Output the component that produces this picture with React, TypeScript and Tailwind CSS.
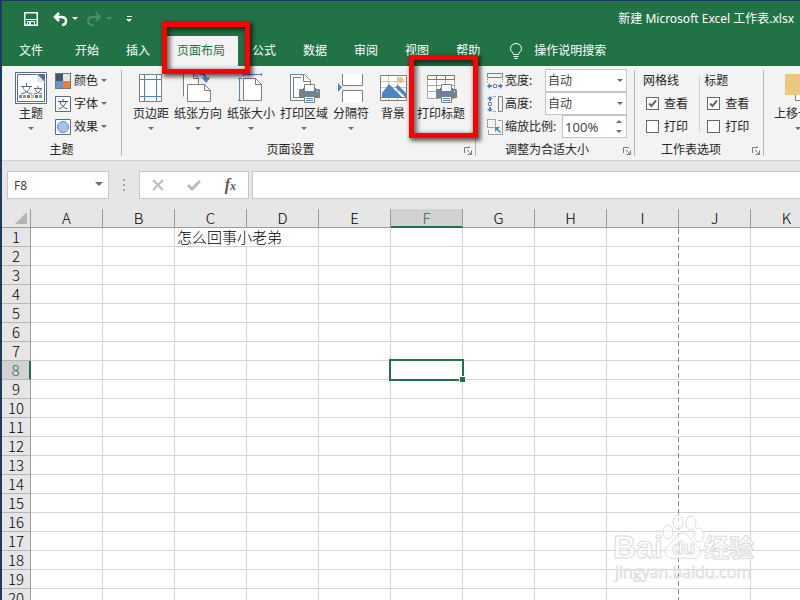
import type { ReactNode } from "react";

const COLUMNS = ["A", "B", "C", "D", "E", "F", "G", "H", "I", "J", "K", "L"];
const ROWS = Array.from({ length: 24 }, (_, i) => i + 1);
const ACTIVE_COLUMN = "F";
const ACTIVE_ROW = 8;

type ChildrenProps = { children: ReactNode };

function Caret({ className = "text-[#6d6d6d]" }: { className?: string }) {
  return (
    <svg viewBox="0 0 6 3" className={`h-[3px] w-[6px] shrink-0 ${className}`}>
      <path d="M0 0h6L3 3z" fill="currentColor" />
    </svg>
  );
}

/* ---------- icons ---------- */

function ThemeIcon() {
  const swatches = ["#5b9bd5", "#ed7d31", "#7f7f7f", "#ffc000", "#4472c4", "#70ad47"];
  return (
    <svg viewBox="0 0 32 32" className="size-8" fill="none">
      <path d="M.5.5h31v31H.5z" fill="#fff" stroke="#5a6e8c" />
      <path d="M2.5 29.500v-27h19l8 8v19z" stroke="#5a6e8c" />
      <path d="M22 2v8h8V2z" fill="#5a6e8c" />
      <path d="M22 2v8h8z" fill="#dfe4ec" />
      <path
        d="M6 14.500h11M11.500 11v3M15 15c-1 4-4 6-9 7M8 15c1 4 4 6 9 7M19 16.500h8M23 14v2M26 17c-1 3-3 4-7 5M20 17c1 3 3 4 7 5"
        stroke="#5a6e8c"
      />
      {swatches.map((color, i) => (
        <rect key={color} x={4 + i * 4} y="23" width="3" height="3" fill={color} />
      ))}
    </svg>
  );
}

function ColorsIcon() {
  return (
    <svg viewBox="0 0 16 16" className="size-4">
      <path d="M0 0h16v16H0z" fill="#777" />
      <path d="M1 1h7v7H1z" fill="#44546a" />
      <path d="M8 1h7v7H8z" fill="#e7e6e6" />
      <path d="M1 8h7v7H1z" fill="#5b9bd5" />
      <path d="M8 8h7v7H8z" fill="#ed7d31" />
    </svg>
  );
}

function FontsIcon() {
  return (
    <svg viewBox="0 0 16 16" className="size-4" fill="none">
      <path d="M.5.5h15v15H.5z" fill="#fff" stroke="#5a6e8c" />
      <path d="M3 5.500h10M8 3v2.500M11 6c-.8 3-3 5.500-7.500 7M5 6c.8 3 3 5.500 7.500 7" stroke="#44546a" />
    </svg>
  );
}

function EffectsIcon() {
  return (
    <svg viewBox="0 0 16 16" className="size-4">
      <path d="M.5.5h15v15H.5z" fill="#fff" stroke="#5a6e8c" />
      <circle cx="8" cy="8" r="5.500" fill="#a3c4ec" stroke="#5b8fcf" />
    </svg>
  );
}

function MarginsIcon() {
  return (
    <svg viewBox="0 0 32 32" className="size-8" fill="none">
      <path d="M4.500 2.500h22v27h-22z" fill="#fff" stroke="#7f7f7f" />
      <path d="M9.500 3v26M21.500 3v26M5 7.500h21M5 24.500h21" stroke="#4a86c5" />
    </svg>
  );
}

function OrientationIcon() {
  return (
    <svg viewBox="0 0 32 32" className="size-8" fill="none">
      <path d="M1.500 24.500v-23h10l5 5v6M11.500 1.500v5h5" fill="#fff" stroke="#7f7f7f" />
      <path d="M5.500 29.500v-17h17l6 6v11z" fill="#fff" stroke="#7f7f7f" />
      <path d="M22.500 12.500v6h6" stroke="#7f7f7f" />
      <path d="M17 1.500c4 0 7 2 7 6" stroke="#4a86c5" strokeWidth="2" />
      <path d="M19.500 5.500h9L24 11z" fill="#4a86c5" />
    </svg>
  );
}

function SizeIcon() {
  return (
    <svg viewBox="0 0 32 32" className="size-8" fill="none">
      <path d="M8.500 6.500h12l6 6v16h-18z" fill="#fff" stroke="#7f7f7f" />
      <path d="M20.500 6.500v6h6" stroke="#7f7f7f" />
      <path d="M4.500 6v22M3 6.500h4M3 28.500h4M8 2.500h18M8.500 1v3M26.500 1v3" stroke="#4a86c5" />
    </svg>
  );
}

function Printer({ x, y }: { x: number; y: number }) {
  return (
    <g transform={`translate(${x} ${y})`}>
      <path d="M0 6l1-1h19l1 1v8H0z" fill="#7f7f7f" />
      <path d="M4 4h13v5H4z" fill="#4a86c5" />
      <path d="M5.500.5h10v7h-10z" fill="#fff" stroke="#7f7f7f" />
      <path d="M18 7h1v1h-1z" fill="#fff" />
      <path d="M5.500 12.500h10v6h-10z" fill="#fff" stroke="#7f7f7f" />
      <path d="M7 14.500h7M7 16.500h7" stroke="#4a86c5" />
    </g>
  );
}

function PrintAreaIcon() {
  return (
    <svg viewBox="0 0 32 32" className="size-8" fill="none">
      <path d="M2.500 2.500h14l6 6v20h-20z" fill="#fff" stroke="#7f7f7f" />
      <path d="M15.500 2.500v7h7" stroke="#7f7f7f" />
      <path d="M13 5.500H5.500v20H13" stroke="#4a86c5" />
      <Printer x={11} y={12} />
    </svg>
  );
}

function BreaksIcon() {
  return (
    <svg viewBox="0 0 32 32" className="size-8" fill="none">
      <path d="M7.500 2v11.500h20V2M7.500 30V18.500h20V30" fill="#fff" stroke="#7f7f7f" />
      <path d="M3 11v9l4-4.500z" fill="#4a86c5" />
    </svg>
  );
}

function BackgroundIcon() {
  return (
    <svg viewBox="0 0 32 32" className="size-8" fill="none">
      <path d="M3.500 3.500h26v25h-26z" fill="#fff" stroke="#7f7f7f" />
      <path d="M11.500 4v24M20.500 4v24M4 9.500h25M4 15.500h25" stroke="#c5c5c5" />
      <circle cx="23.500" cy="8" r="3" fill="#eec27a" />
      <path d="M5 25v-4l7-9 13 13z" fill="#4a86c5" />
      <path d="M18 15l3-2 8 8v4h-1z" fill="#4a86c5" />
      <path d="M3.500 25.500h26" stroke="#7f7f7f" />
    </svg>
  );
}

function PrintTitlesIcon() {
  return (
    <svg viewBox="0 0 32 32" className="size-8" fill="none">
      <path d="M2.500 7.500h27v19h-27z" fill="#fff" stroke="#a6a6a6" />
      <path d="M11.500 8v18M20.500 8v18M3 13.500h26M3 19.500h26" stroke="#a6a6a6" />
      <path d="M2.500 3.500h27v4h-27zM11.500 3.500v4M20.500 3.500v4" fill="#fff" stroke="#d0563a" />
      <Printer x={11} y={12} />
    </svg>
  );
}

function WidthIcon() {
  return (
    <svg viewBox="0 0 16 16" className="size-4" fill="none">
      <path d="M.5.5h15v4H.5z" stroke="#7f7f7f" />
      <path d="M.5 6v4M15.500 6v4" stroke="#7f7f7f" strokeDasharray="1 1" />
      <path d="M6.500 11.500h3v3h-3z" stroke="#7f7f7f" />
      <path d="M0 13l3-3v2h2v2H3v2zM16 13l-3-3v2h-2v2h2v2z" fill="#4a86c5" />
    </svg>
  );
}

function HeightIcon() {
  return (
    <svg viewBox="0 0 16 16" className="size-4" fill="none">
      <path d="M11.500.5h4v15h-4z" stroke="#7f7f7f" />
      <path d="M6 .5h4M6 15.500h4" stroke="#7f7f7f" strokeDasharray="1 1" />
      <path d="M1.500 6.500h3v3h-3z" stroke="#7f7f7f" />
      <path d="M3 0l3 3H4v2H2V3H0zM3 16l3-3H4v-2H2v2H0z" fill="#4a86c5" />
    </svg>
  );
}

function ScaleIcon() {
  return (
    <svg viewBox="0 0 16 16" className="size-4" fill="none">
      <path d="M.5.5h8v8h-8z" stroke="#7f7f7f" strokeDasharray="2 1" />
      <path d="M11 1.500h4.500v14H1.500V11" stroke="#a0a0a0" />
      <path d="M8 8h5l-2 2 3 3-1 1-3-3-2 2z" fill="#4a86c5" />
    </svg>
  );
}

function BringForwardIcon() {
  return (
    <svg viewBox="0 0 32 32" className="size-8" fill="none">
      <path d="M13.500 13.500h15v15h-15z" fill="#fff" stroke="#7f7f7f" />
      <path d="M3 2h21v21H3z" fill="#eec77d" />
    </svg>
  );
}

function LauncherButton({ label }: { label: string }) {
  return (
    <button type="button" aria-label={label} className="mt-1 flex w-4 shrink-0 justify-end pr-[3px]">
      <svg viewBox="0 0 8 8" className="size-2" fill="none" stroke="#777">
        <path d="M.5 6V.5H6M3 3l4 4M7.500 3.500v4h-4" />
      </svg>
    </button>
  );
}

/* ---------- title bar and tabs ---------- */

function TitleBar() {
  return (
    <div className="flex h-[35px] items-center pr-[6px] pl-[22px] text-white">
      <button type="button" aria-label="保存">
        <svg viewBox="0 0 14 14" className="size-[14px]" fill="none" stroke="#fff">
          <path d="M.75.75h12.500v12.500H.75z" strokeWidth="1.500" />
          <path d="M2 7.500h10M3.500 13V9.500h7V13" />
          <path d="M5 10h2v3H5z" fill="#fff" stroke="none" />
        </svg>
      </button>
      <button type="button" aria-label="撤消" className="ml-[14px] flex items-center gap-1">
        <svg viewBox="0 0 16 14" className="h-[14px] w-4" fill="none" stroke="#fff" strokeWidth="2.500">
          <path d="M7 1L3 5l4 4M3 5h6c3 0 5 1 5 4s-2 4-4 4" />
        </svg>
        <Caret className="text-white" />
      </button>
      <button type="button" aria-label="恢复" className="ml-2 flex items-center gap-1">
        <svg viewBox="0 0 16 14" className="h-[14px] w-4" fill="none" stroke="#4d8f6b" strokeWidth="2">
          <path d="M10 1l4 4-4 4M14 5H7C4 5 2 6 2 9s2 4 5 4" />
        </svg>
        <Caret className="text-[#4d8f6b]" />
      </button>
      <button type="button" aria-label="自定义快速访问工具栏" className="ml-[14px] flex flex-col items-center gap-[2px]">
        <span className="h-px w-[5px] bg-white" />
        <Caret className="text-white" />
      </button>
      <h1 className="ml-auto text-xs whitespace-nowrap">新建 Microsoft Excel 工作表.xlsx</h1>
    </div>
  );
}

function Highlight({ className }: { className: string }) {
  return (
    <span
      className={`pointer-events-none absolute z-10 border-[5px] border-[#fe0000] shadow-[2px_2px_4px_1px_rgba(0,0,0,0.6),inset_2px_2px_5px_1px_rgba(0,0,0,0.6)] ${className}`}
    />
  );
}

function Tabs() {
  const tabs = ["开始", "插入", "页面布局", "公式", "数据", "审阅", "视图", "帮助"];
  return (
    <nav className="flex h-[30px] gap-px text-xs text-white">
      <button type="button" className="pr-[18px] pl-[17px]">
        文件
      </button>
      {tabs.map((tab) =>
        tab === "页面布局" ? (
          <button key={tab} type="button" className="relative bg-[#f3f3f3] px-[13px] text-[#217346]">
            {tab}
            <Highlight className="-top-[14px] -left-[2px] h-[52px] w-[88px]" />
          </button>
        ) : (
          <button key={tab} type="button" className="px-[13px]">
            {tab}
          </button>
        )
      )}
      <button type="button" className="flex items-center gap-3 pl-4">
        <svg viewBox="0 0 12 17" className="h-[17px] w-3" fill="none" stroke="#fff">
          <path d="M3.500 11.500c0-2-3-3-3-6a5.500 5 0 0 1 11 0c0 3-3 4-3 6zM3.500 13.500h5M4.500 15.500h3" />
        </svg>
        操作说明搜索
      </button>
    </nav>
  );
}

/* ---------- ribbon ---------- */

type GroupProps = {
  title?: string;
  launcher?: boolean;
  className?: string;
  children: ReactNode;
};

function Group({ title, launcher, className = "", children }: GroupProps) {
  return (
    <section className="flex shrink-0">
      <div className="flex flex-col pt-[3px]">
        <div className={`flex h-[69px] shrink-0 ${className}`}>{children}</div>
        <div className="flex h-[22px] items-center">
          <h2 className="flex-1 pt-[2px] text-center">{title}</h2>
          {launcher && <LauncherButton label={`${title}选项`} />}
        </div>
      </div>
      <div className="mt-1 h-[86px] w-px bg-[#b5b5b5]" />
    </section>
  );
}

type LargeButtonProps = {
  icon: ReactNode;
  label: string;
  caret?: boolean;
  className?: string;
  children?: ReactNode;
};

function LargeButton({ icon, label, caret = true, className = "px-[2px]", children }: LargeButtonProps) {
  return (
    <button type="button" className={`relative flex shrink-0 flex-col items-center pt-[3px] ${className}`}>
      {icon}
      <span className="mt-[2px] mb-[5px] leading-4 whitespace-nowrap">{label}</span>
      {caret && <Caret />}
      {children}
    </button>
  );
}

function SmallButton({ icon, label }: { icon: ReactNode; label: string }) {
  return (
    <button type="button" className="flex h-[23px] items-center gap-[3px]">
      {icon}
      <span>{label}</span>
      <Caret />
    </button>
  );
}

function FitSelect({ id, icon, label }: { id: string; icon: ReactNode; label: string }) {
  return (
    <div className="flex h-[23px] items-center">
      {icon}
      <label htmlFor={id} className="ml-[2px] flex-1">
        {label}
      </label>
      <div className="relative">
        <select
          id={id}
          className="block h-[23px] w-[82px] appearance-none border border-[#c6c6c6] bg-white pl-[2px] text-xs text-[#444]"
        >
          <option>自动</option>
        </select>
        <span className="pointer-events-none absolute top-[10px] right-1">
          <Caret />
        </span>
      </div>
    </div>
  );
}

function Option({ label, checked = false }: { label: string; checked?: boolean }) {
  return (
    <label className="flex h-[23px] items-center gap-[5px] pl-[3px]">
      <span className="relative size-[13px]">
        <input
          type="checkbox"
          defaultChecked={checked}
          className="peer block size-[13px] appearance-none border border-[#666] bg-white"
        />
        <svg
          viewBox="0 0 13 13"
          className="pointer-events-none invisible absolute inset-0 peer-checked:visible"
          fill="none"
          stroke="#666"
          strokeWidth="2"
        >
          <path d="M3 6.500l2.500 2.500L10 3.500" />
        </svg>
      </span>
      {label}
    </label>
  );
}

function OptionColumn({ title, children }: { title: string } & ChildrenProps) {
  return (
    <fieldset>
      <legend className="h-[23px] leading-[23px]">{title}</legend>
      {children}
    </fieldset>
  );
}

function Ribbon() {
  return (
    <div className="flex h-[95px] border-b border-[#d2d2d2] bg-[#f3f3f3] text-xs text-[#262626]">
      <Group title="主题" className="pr-[14px] pl-[13px]">
        <LargeButton icon={<ThemeIcon />} label="主题" className="mr-2" />
        <div className="flex flex-col">
          <SmallButton icon={<ColorsIcon />} label="颜色" />
          <SmallButton icon={<FontsIcon />} label="字体" />
          <SmallButton icon={<EffectsIcon />} label="效果" />
        </div>
      </Group>

      <Group title="页面设置" launcher className="gap-px pr-2 pl-[9px]">
        <LargeButton icon={<MarginsIcon />} label="页边距" />
        <LargeButton icon={<OrientationIcon />} label="纸张方向" />
        <LargeButton icon={<SizeIcon />} label="纸张大小" />
        <LargeButton icon={<PrintAreaIcon />} label="打印区域" />
        <LargeButton icon={<BreaksIcon />} label="分隔符" />
        <LargeButton icon={<BackgroundIcon />} label="背景" caret={false} className="w-[42px]" />
        <LargeButton icon={<PrintTitlesIcon />} label="打印标题" caret={false}>
          <Highlight className="-top-[14px] -left-[6px] h-[83px] w-[69px]" />
        </LargeButton>
      </Group>

      <Group title="调整为合适大小" launcher className="w-[158px] flex-col pr-[7px] pl-[11px]">
        <FitSelect id="fit-width" icon={<WidthIcon />} label="宽度:" />
        <FitSelect id="fit-height" icon={<HeightIcon />} label="高度:" />
        <div className="flex h-[23px] items-center">
          <ScaleIcon />
          <label htmlFor="fit-scale" className="ml-[2px] flex-1 whitespace-nowrap">
            缩放比例:
          </label>
          <div className="relative">
            <input
              id="fit-scale"
              defaultValue="100%"
              className="block h-[23px] w-[65px] border border-[#c6c6c6] bg-white pl-[2px] text-[13px] text-[#444]"
            />
            <span className="pointer-events-none absolute top-[5px] right-[5px] flex flex-col gap-[7px]">
              <Caret className="rotate-180 text-[#6d6d6d]" />
              <Caret />
            </span>
          </div>
        </div>
      </Group>

      <Group title="工作表选项" launcher className="w-[128px] pl-2">
        <OptionColumn title="网格线">
          <Option label="查看" checked />
          <Option label="打印" />
        </OptionColumn>
        <div className="mt-[7px] mr-1 ml-[11px] h-14 w-px bg-[#d2d2d2]" />
        <OptionColumn title="标题">
          <Option label="查看" checked />
          <Option label="打印" />
        </OptionColumn>
      </Group>

      <Group className="pl-2">
        <LargeButton icon={<BringForwardIcon />} label="上移一层" />
      </Group>
    </div>
  );
}

/* ---------- formula bar ---------- */

function FormulaBar() {
  return (
    <div className="flex h-12 items-start bg-[#e6e6e6] pt-[10px] pl-[5px]">
      <div className="relative">
        <input
          aria-label="名称框"
          defaultValue="F8"
          className="block h-7 w-[102px] border border-[#c6c6c6] bg-white pl-[6px] text-xs text-[#444]"
        />
        <svg viewBox="0 0 8 4" className="pointer-events-none absolute top-[11px] right-[6px] h-1 w-2">
          <path d="M0 0h8L4 4z" fill="#6d6d6d" />
        </svg>
      </div>
      <div className="flex h-7 w-[30px] flex-col items-center justify-center gap-[3px]">
        <span className="size-[2px] bg-[#a6a6a6]" />
        <span className="size-[2px] bg-[#a6a6a6]" />
        <span className="size-[2px] bg-[#a6a6a6]" />
      </div>
      <div className="flex h-7 w-[110px] items-center justify-between border border-[#c6c6c6] bg-white px-3">
        <button type="button" aria-label="取消">
          <svg viewBox="0 0 12 12" className="size-3" fill="none" stroke="#bdbdbd" strokeWidth="2">
            <path d="M1 1l10 10M11 1L1 11" />
          </svg>
        </button>
        <button type="button" aria-label="输入">
          <svg viewBox="0 0 14 12" className="h-3 w-[14px]" fill="none" stroke="#bdbdbd" strokeWidth="3">
            <path d="M1 6l4 4 8-8" />
          </svg>
        </button>
        <button type="button" className="font-['Liberation_Serif',serif] text-base leading-4 font-bold text-[#5a5a5a] italic">
          f<span className="text-xs">x</span>
        </button>
      </div>
      <input aria-label="编辑栏" className="ml-[3px] h-7 min-w-0 flex-1 border border-r-0 border-[#c6c6c6] bg-white px-2 text-xs" />
    </div>
  );
}

/* ---------- sheet ---------- */

function Sheet() {
  return (
    <div className="relative min-h-0 flex-1 overflow-hidden bg-white">
      <table className="w-max table-fixed border-separate border-spacing-0 font-['Noto_Sans_CJK_SC',sans-serif] text-[15px] leading-[18px] text-black">
        <colgroup>
          <col className="w-[29px]" />
          {COLUMNS.map((column) => (
            <col key={column} className="w-[72px]" />
          ))}
        </colgroup>
        <thead>
          <tr className="h-[19px] bg-[#e6e6e6]">
            <td className="border-r border-b border-[#9b9b9b] p-0">
              <svg viewBox="0 0 12 12" className="mr-[3px] ml-auto size-3">
                <path d="M12 0v12H0z" fill="#b4b4b4" />
              </svg>
            </td>
            {COLUMNS.map((column) => (
              <th
                key={column}
                scope="col"
                className={`h-[19px] border-r p-0 font-light ${
                  column === ACTIVE_COLUMN
                    ? "border-b-2 border-r-[#9b9b9b] border-b-[#217346] bg-[#d2d2d2] leading-[17px] text-[#217346]"
                    : "border-b border-[#9b9b9b]"
                }`}
              >
                {column}
              </th>
            ))}
          </tr>
        </thead>
        <tbody>
          {ROWS.map((row) => (
            <tr key={row} className="h-[19px]">
              <th
                scope="row"
                className={`h-[19px] p-0 font-light ${
                  row === ACTIVE_ROW
                    ? "border-r-2 border-b border-r-[#217346] border-b-[#b5b5b5] bg-[#d2d2d2] text-[#217346]"
                    : "border-r border-b border-r-[#9b9b9b] border-b-[#b5b5b5] bg-[#e6e6e6]"
                }`}
              >
                {row}
              </th>
              {COLUMNS.map((column) => {
                if (row === 1 && column === "C") {
                  return (
                    <td
                      key={column}
                      colSpan={2}
                      className="border-r border-b border-[#d4d4d4] bg-white py-0 pr-0 pl-[2px] font-light whitespace-nowrap"
                    >
                      怎么回事小老弟
                    </td>
                  );
                }
                if (row === 1 && column === "D") return null;
                return (
                  <td key={column} className="relative border-r border-b border-[#d4d4d4] bg-white p-0">
                    {row === ACTIVE_ROW && column === ACTIVE_COLUMN && (
                      <span className="absolute -top-[2px] -left-[2px] z-10 h-[22px] w-[75px] border-2 border-[#217346]">
                        <span className="absolute -right-[4px] -bottom-[4px] size-[7px] border border-white bg-[#217346]" />
                      </span>
                    )}
                  </td>
                );
              })}
            </tr>
          ))}
        </tbody>
      </table>

      {/* page break between I and J */}
      <div className="absolute top-5 bottom-0 left-[676px] w-px bg-[repeating-linear-gradient(#8c8c8c_0_5px,#ffffff_5px_8px)]" />

      <Watermark />
    </div>
  );
}

function Watermark() {
  return (
    <svg
      viewBox="0 0 150 72"
      className="pointer-events-none absolute right-10 bottom-[15px] h-[72px] w-[150px]"
      fill="#fff"
      fillOpacity="0.7"
      stroke="#dcdcdc"
      strokeLinejoin="round"
    >
      <g className="font-['Liberation_Sans',sans-serif] font-bold">
        <text x="3" y="45" fontSize="32">
          Bai
        </text>
        <text x="94" y="44" fontSize="25" className="font-['Noto_Sans_CJK_SC',sans-serif]">
          经验
        </text>
      </g>
      <ellipse cx="58" cy="19" rx="5" ry="7" />
      <ellipse cx="68" cy="9" rx="5" ry="7" />
      <ellipse cx="81" cy="10" rx="5" ry="7" />
      <ellipse cx="89" cy="22" rx="5" ry="7" />
      <path d="M72 20c6 0 8 6 12 10 5 4 8 8 5 13-3 4-9 2-16 2s-12 2-16-2c-4-6 0-10 5-14 4-4 5-9 10-9z" />
      <text x="62" y="41" fontSize="19" className="font-['Liberation_Sans',sans-serif] font-bold">
        du
      </text>
      <text x="5" y="65" fontSize="16" strokeWidth="0.8" className="font-['Open_Sans',sans-serif]">
        jingyan.baidu.com
      </text>
    </svg>
  );
}

export default function App() {
  return (
    <div className="flex h-screen flex-col overflow-hidden bg-[#1f3a5c] pt-px pl-[2px] font-['Noto_Sans','Noto_Sans_CJK_SC',sans-serif]">
      <header className="bg-[#217346]">
        <TitleBar />
        <Tabs />
      </header>
      <Ribbon />
      <FormulaBar />
      <Sheet />
    </div>
  );
}
